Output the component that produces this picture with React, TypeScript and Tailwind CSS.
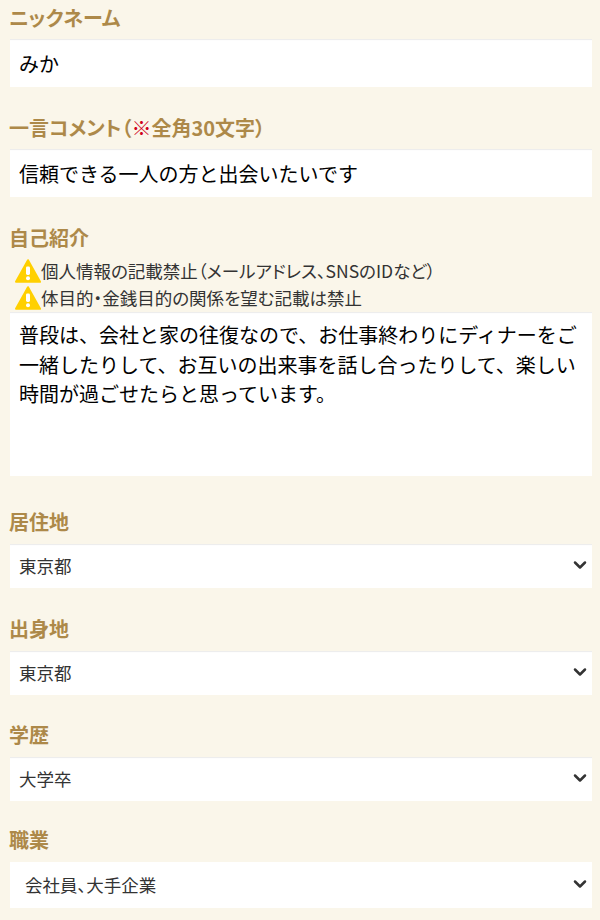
import { ChevronDown } from 'lucide-react';

const labelClass = "block -ml-px h-[21px] text-[20px] leading-[19px] font-bold text-[#ad8949] [font-feature-settings:'palt']";
const boxClass = "block w-full bg-white rounded-none outline-none pl-[9px] pr-2 shadow-[inset_0_2px_1px_-1px_rgba(0,0,0,0.08)]";

function Warning() {
    return (
        <svg viewBox="0 0 26 24" className="w-[26px] h-[24px] shrink-0">
            <path d="M13 1.2 L25 22.8 L1 22.8 Z" fill="#ffd000" stroke="#ffd000" strokeWidth="2" strokeLinejoin="round" />
            <rect x="11" y="7.5" width="4" height="8.5" rx="1.4" fill="#fff" />
            <circle cx="13" cy="19.2" r="2" fill="#fff" />
        </svg>
    );
}

function SelectField({ label, value, top, last }: { label: string; value: string; top: string; last?: boolean }) {
    return (
        <div className={top}>
            <label className={labelClass}>{label}</label>
            <div className={last ? "relative mt-[11px] h-[46px]" : "relative mt-[11px] h-[44px]"}>
                <select
                    defaultValue={value}
                    className={`${boxClass} h-full appearance-none text-[17.5px] text-[#333] [font-feature-settings:'palt'] ${last ? "pl-[15px] shadow-none" : ""}`}
                >
                    <option>{value}</option>
                </select>
                <ChevronDown
                    className={`absolute right-[2px] w-[20px] h-[20px] text-[#333] pointer-events-none ${last ? "top-[12px]" : "top-[11px]"}`}
                    strokeWidth={3}
                />
            </div>
        </div>
    );
}

export default function App() {
    return (
        <div className="w-[600px] h-[920px] overflow-hidden bg-[#faf6ea] pl-[10px] pr-[8px] pt-[8px] font-['Noto_Sans_CJK_JP','Noto_Sans',sans-serif]">
            <div>
                <label className={labelClass}>ニックネーム</label>
                <input defaultValue="みか" className={`${boxClass} mt-[10px] h-[48px] text-[20px] text-black`} />
            </div>

            <div className="mt-[31px]">
                <label className={labelClass}>
                    一言コメント（<span className="text-[#d0021b]">※</span>全角30文字）
                </label>
                <input defaultValue="信頼できる一人の方と出会いたいです" className={`${boxClass} mt-[10px] h-[48px] text-[20px] text-black`} />
            </div>

            <div className="mt-[31px]">
                <label className={labelClass}>自己紹介</label>
                <div className="mt-[8px] mb-px pl-[5px] text-[17.5px] leading-[27px] text-[#333] [font-feature-settings:'palt']">
                    <div className="flex items-center h-[27px]">
                        <Warning />
                        <span>個人情報の記載禁止（メールアドレス、SNSのIDなど）</span>
                    </div>
                    <div className="flex items-center h-[27px]">
                        <Warning />
                        <span>体目的・金銭目的の関係を望む記載は禁止</span>
                    </div>
                </div>
                <textarea
                    defaultValue="普段は、会社と家の往復なので、お仕事終わりにディナーをご一緒したりして、お互いの出来事を話し合ったりして、楽しい時間が過ごせたらと思っています。"
                    className={`${boxClass} h-[164px] pt-[8px] text-[20px] leading-[29.6px] text-black resize-none`}
                />
            </div>

            <SelectField label="居住地" value="東京都" top="mt-[36px]" />
            <SelectField label="出身地" value="東京都" top="mt-[31px]" />
            <SelectField label="学歴" value="大学卒" top="mt-[30px]" />
            <SelectField label="職業" value="会社員、大手企業" top="mt-[29px]" last />
        </div>
    );
}
